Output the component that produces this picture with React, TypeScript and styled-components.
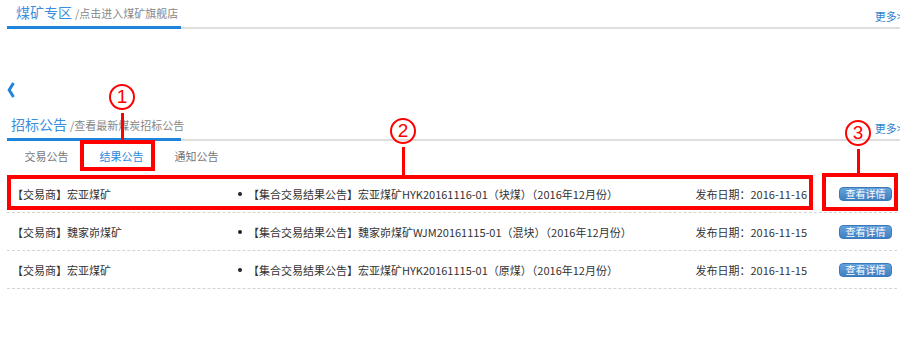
import React from 'react';
import styled, { createGlobalStyle } from 'styled-components';

const GlobalStyle = createGlobalStyle`
	body {
		margin: 0;
		overflow: hidden;
		background: #fff;
		font-family: 'Noto Sans CJK SC', 'Microsoft YaHei', sans-serif;
	}
`;

const notices = [
	{
		trader: '【交易商】宏亚煤矿',
		title: '【集合交易结果公告】宏亚煤矿HYK20161116-01（块煤）（2016年12月份）',
		date: '2016-11-16',
	},
	{
		trader: '【交易商】魏家峁煤矿',
		title: '【集合交易结果公告】魏家峁煤矿WJM20161115-01（混块）（2016年12月份）',
		date: '2016-11-15',
	},
	{
		trader: '【交易商】宏亚煤矿',
		title: '【集合交易结果公告】宏亚煤矿HYK20161115-01（原煤）（2016年12月份）',
		date: '2016-11-15',
	},
];

const tabs = ['交易公告', '结果公告', '通知公告'];

const App = () => {
	return (
		<Page>
			<GlobalStyle />
			<SectionHead>
				<TitleTab $indent={9}>
					<Title>煤矿专区</Title>
					<Sub>/点击进入煤矿旗舰店</Sub>
				</TitleTab>
				<More>更多&gt;&gt;</More>
			</SectionHead>

			<PrevArrow width='8' height='16' viewBox='0 0 8 16'>
				<path d='M6.5 1 L2.2 8 L6.5 15' fill='none' stroke='#1f84dc' strokeWidth='3' />
			</PrevArrow>

			<SectionHead>
				<TitleTab $indent={4}>
					<Title>招标公告</Title>
					<Sub>/查看最新煤炭招标公告</Sub>
				</TitleTab>
				<More>更多&gt;&gt;</More>
			</SectionHead>

			<TabBar>
				{tabs.map((t, i) => (
					<Tab key={t} $active={i === 1}>
						{t}
					</Tab>
				))}
			</TabBar>

			<NoticeList>
				{notices.map((n, i) => (
					<NoticeRow key={i}>
						<Trader>{n.trader}</Trader>
						<NoticeTitle>
							<Bullet />
							{n.title}
						</NoticeTitle>
						<NoticeDate>发布日期：{n.date}</NoticeDate>
						<ActionCell>
							<DetailButton>查看详情</DetailButton>
						</ActionCell>
					</NoticeRow>
				))}
			</NoticeList>

			{/* red annotations drawn over the screenshot */}
			<Mark $x={80} $y={140} $w={75} $h={31} />
			<Mark $x={7} $y={175} $w={806} $h={35} />
			<Mark $x={822} $y={173} $w={76} $h={38} />
			<Callout $x={109} $y={84}>
				<Badge>1</Badge>
				<Stem $h={27} />
			</Callout>
			<Callout $x={390} $y={118}>
				<Badge>2</Badge>
				<Stem $h={28} />
			</Callout>
			<Callout $x={845} $y={120}>
				<Badge>3</Badge>
				<Stem $h={24} />
			</Callout>
		</Page>
	);
};

export default App;

const Page = styled.div`
	position: relative;
	width: 900px;
	height: 349px;
	padding-left: 7px;
	box-sizing: border-box;
`;

const SectionHead = styled.div`
	display: flex;
	align-items: flex-end;
	justify-content: space-between;
	width: 902px;
	height: 27px;
	border-bottom: 2px solid #dedede;
`;

const TitleTab = styled.div<{ $indent: number }>`
	width: ${({ $indent }) => 174 - $indent}px;
	padding: 3px 0 3px ${({ $indent }) => $indent}px;
	line-height: 20px;
	border-bottom: 3px solid #1f84dc;
	margin-bottom: -2px;
	white-space: nowrap;
`;

const Title = styled.span`
	font-size: 14px;
	color: #3b8fe0;
`;

const Sub = styled.span`
	font-size: 11px;
	color: #888;
	margin-left: 3px;
`;

const More = styled.span`
	font-size: 11px;
	line-height: 14px;
	color: #2f7fd0;
	margin-bottom: 4px;
	white-space: nowrap;
`;

const PrevArrow = styled.svg`
	display: block;
	margin: 53px 0 14px 0;
`;

const TabBar = styled.div`
	display: flex;
	height: 30px;
	padding-left: 2px;
`;

const Tab = styled.div<{ $active?: boolean }>`
	width: 75px;
	text-align: center;
	font-size: 11px;
	line-height: 30px;
	color: ${({ $active }) => ($active ? '#2a8ae0' : '#777')};
`;

const NoticeList = styled.div`
	margin-top: 4px;
	width: 890px;
`;

const NoticeRow = styled.div`
	display: grid;
	grid-template-columns: 225px 1fr auto 90px;
	align-items: center;
	height: 38px;
	padding-left: 5px;
	box-sizing: border-box;
	border-bottom: 1px dashed #d4d4d4;
	font-size: 11px;
	color: #333;
	white-space: nowrap;
`;

const Trader = styled.div``;

const NoticeTitle = styled.div`
	display: flex;
	align-items: center;
`;

const Bullet = styled.span`
	width: 4px;
	height: 4px;
	margin: 0 6px 0 1px;
	border-radius: 50%;
	background: #222;
`;

const NoticeDate = styled.div`
	text-align: right;
`;

const ActionCell = styled.div`
	display: flex;
	justify-content: flex-end;
	padding-right: 5px;
`;

const DetailButton = styled.button`
	width: 53px;
	height: 14px;
	padding: 0;
	border: 1px solid #3b79b9;
	border-radius: 4px;
	background: linear-gradient(#62a2dc, #3f80c2);
	color: #fff;
	font-family: inherit;
	font-size: 10px;
	line-height: 12px;
`;

const Mark = styled.div<{ $x: number; $y: number; $w: number; $h: number }>`
	position: absolute;
	left: ${({ $x }) => $x}px;
	top: ${({ $y }) => $y}px;
	width: ${({ $w }) => $w}px;
	height: ${({ $h }) => $h}px;
	border: 4px solid #f00;
	box-sizing: border-box;
	pointer-events: none;
`;

const Callout = styled.div<{ $x: number; $y: number }>`
	position: absolute;
	left: ${({ $x }) => $x}px;
	top: ${({ $y }) => $y}px;
	display: flex;
	flex-direction: column;
	align-items: center;
	pointer-events: none;
`;

const Badge = styled.div`
	width: 26px;
	height: 26px;
	border: 2px solid #f00;
	border-radius: 50%;
	box-sizing: border-box;
	color: #f00;
	font-family: 'Liberation Sans', sans-serif;
	font-size: 19px;
	line-height: 22px;
	text-align: center;
`;

const Stem = styled.div<{ $h: number }>`
	width: 3px;
	height: ${({ $h }) => $h}px;
	margin-top: 3px;
	background: #f00;
`;
